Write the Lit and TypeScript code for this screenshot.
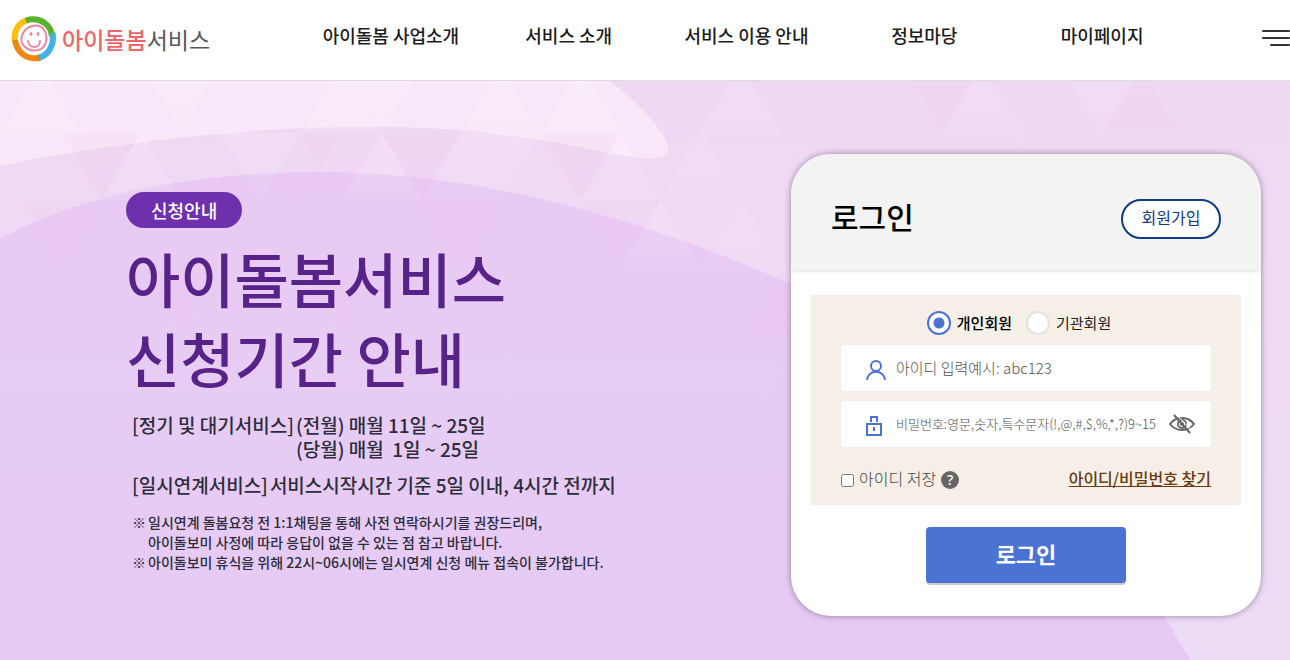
import { LitElement, html, css, svg } from "lit";
import { customElement, state } from "lit/decorators.js";

const NAV = ["아이돌봄 사업소개", "서비스 소개", "서비스 이용 안내", "정보마당", "마이페이지"];

@customElement("site-header")
class SiteHeader extends LitElement {
  static styles = css`
    :host {
      display: block;
    }
    .bar {
      display: flex;
      align-items: center;
      height: 80px;
      background: #fff;
      border-bottom: 1px solid #dcdcdc;
    }
    .brand {
      display: flex;
      align-items: center;
      gap: 5px;
      box-sizing: border-box;
      width: 302px;
      padding: 0 0 3px 11px;
      flex: none;
      color: #58585a;
      font-size: 23px;
      line-height: 46px;
      text-decoration: none;
    }
    .brand b {
      font-weight: 500;
      color: #ee6468;
    }
    .brand svg {
      display: block;
      flex: none;
    }
    nav {
      flex: 1;
      padding-bottom: 10px;
    }
    ul {
      display: grid;
      grid-template-columns: repeat(5, 1fr);
      margin: 0;
      padding: 0;
      list-style: none;
    }
    li {
      text-align: center;
    }
    li a {
      color: #1c1c1c;
      font-size: 18px;
      font-weight: 500;
      line-height: 28px;
      text-decoration: none;
      white-space: nowrap;
    }
    .menu {
      display: flex;
      justify-content: flex-end;
      width: 99px;
      flex: none;
      padding: 0 0 4px;
      border: 0;
      background: none;
      cursor: pointer;
    }
  `;

  render() {
    return html`
      <header class="bar">
        <a class="brand" href="#">
          <svg width="46" height="46" viewBox="0 0 46 46" fill="none" aria-hidden="true">
            <path d="M4 26C2 15 8 6 17 4" stroke="#fbbf0f" stroke-width="6" />
            <path d="M15 4.500C29 0 40 9 41 20" stroke="#57b32c" stroke-width="6" />
            <path d="M41.500 17C44 30 36 41 26 42" stroke="#41b2e9" stroke-width="6" />
            <path d="M29 42C16 44 6 37 4 24" stroke="#f1860f" stroke-width="6" />
            <path d="M17 8l-3-2 5-1zM37 18l2 5 2-6 2 5 2-6zM29 38l-4 3 3 3zM1 27l4-4 3 2z" fill="#57b32c" opacity="0.3" />
            <path d="M21 10C32 7 37 17 35 26S21 37 14 31 11 13 21 10Z" stroke="#f283a6" stroke-width="2" />
            <path d="M17 25C18 33 29 33 29 25" stroke="#f283a6" stroke-width="2" stroke-linecap="round" />
            <ellipse cx="20" cy="18" rx="1.500" ry="2" fill="#f283a6" />
            <ellipse cx="27" cy="18" rx="1.500" ry="2" fill="#f283a6" />
          </svg>
          <span><b>아이돌봄</b>서비스</span>
        </a>
        <nav>
          <ul>
            ${NAV.map((t) => html`<li><a href="#">${t}</a></li>`)}
          </ul>
        </nav>
        <button class="menu" type="button" aria-label="전체메뉴">
          <svg width="28" height="16" viewBox="0 0 28 16" fill="#333" aria-hidden="true">
            <rect width="28" height="2" rx="1" />
            <rect y="7" width="28" height="2" rx="1" />
            <rect x="8" y="14" width="20" height="2" rx="1" />
          </svg>
        </button>
      </header>
    `;
  }
}

@customElement("login-card")
class LoginCard extends LitElement {
  @state() private kind = "person";
  @state() private visible = false;

  static styles = css`
    :host {
      display: block;
    }
    .card {
      border-radius: 40px;
      background: #fff;
      box-shadow: 0 0 6px rgba(70, 40, 80, 0.5);
      overflow: hidden;
    }
    .head {
      display: flex;
      align-items: center;
      justify-content: space-between;
      padding: 45px 40px 31px;
      background: #f3f3f3;
      box-shadow: 0 1px 4px rgba(0, 0, 0, 0.15);
    }
    h2 {
      margin: 0;
      padding-bottom: 6px;
      color: #000;
      font-size: 30px;
      font-weight: 500;
      line-height: 34px;
    }
    .join {
      box-sizing: border-box;
      width: 100px;
      height: 40px;
      border: 2px solid #0f3b85;
      border-radius: 20px;
      background: #fff;
      color: #0f3b85;
      font-size: 16px;
      line-height: 33px;
      text-align: center;
      text-decoration: none;
    }
    form {
      display: flex;
      flex-direction: column;
      align-items: center;
      gap: 22px;
      padding: 25px 20px 33px;
    }
    .box {
      display: flex;
      flex-direction: column;
      gap: 10px;
      box-sizing: border-box;
      width: 100%;
      margin: 0;
      padding: 16px 30px 14px;
      border: 0;
      background: #f6efe8;
    }
    .kinds {
      display: flex;
      justify-content: center;
    }
    .kind {
      display: flex;
      align-items: center;
      gap: 6px;
      margin-right: 14px;
      color: #222;
      font-size: 15px;
      line-height: 24px;
    }
    .kind.on {
      color: #000;
      font-weight: 500;
    }
    .kind input {
      appearance: none;
      box-sizing: border-box;
      width: 24px;
      height: 24px;
      margin: 0;
      border: 2px solid #e2e2e2;
      border-radius: 50%;
      background: #fff;
    }
    .kind input:checked {
      border-color: #4a73d3;
      background: radial-gradient(circle, #4a73d3 5px, #fff 6px);
    }
    .field {
      display: flex;
      align-items: center;
      gap: 9px;
      height: 46px;
      padding: 0 16px 0 24px;
      border-radius: 3px;
      background: #fff;
    }
    .field svg {
      display: block;
      flex: none;
    }
    .field .glyph {
      padding-top: 3px;
    }
    .field input {
      flex: 1;
      min-width: 0;
      padding: 0;
      border: 0;
      outline: 0;
      background: none;
      color: #333;
      font: 300 15px/24px "Noto Sans CJK KR", sans-serif;
    }
    .field input::placeholder {
      color: #505050;
      opacity: 1;
    }
    .field .small {
      font-size: 13px;
    }
    .eye {
      margin-left: 4px;
      padding: 0;
      border: 0;
      background: none;
      cursor: pointer;
    }
    .row {
      display: flex;
      align-items: flex-start;
      justify-content: space-between;
      padding-top: 8px;
    }
    .save {
      display: flex;
      align-items: center;
      gap: 5px;
      color: #444;
      font-size: 16px;
      font-weight: 300;
      line-height: 26px;
    }
    .save input {
      width: 13px;
      height: 13px;
      margin: 4px 0 0;
    }
    .help {
      width: 18px;
      height: 18px;
      margin-top: 4px;
      padding: 0;
      border: 0;
      border-radius: 50%;
      background: #666;
      color: #fff;
      font: 500 14px/18px "Noto Sans", sans-serif;
    }
    .find {
      color: #6b3a12;
      font-size: 16px;
      font-weight: 500;
      line-height: 26px;
    }
    .submit {
      width: 200px;
      height: 56px;
      padding: 0 0 4px;
      border: 0;
      border-radius: 4px;
      background: #4a73d3;
      box-shadow: 0 2px 0 #c9c9d2;
      color: #fff;
      font: 700 22px/32px "Noto Sans CJK KR", sans-serif;
      cursor: pointer;
    }
  `;

  private radio(id: string, text: string) {
    return html`<label class="kind ${this.kind === id ? "on" : ""}">
      <input type="radio" name="kind" .checked=${this.kind === id} @change=${() => (this.kind = id)} />${text}
    </label>`;
  }

  render() {
    return html`
      <section class="card">
        <div class="head">
          <h2>로그인</h2>
          <a class="join" href="#">회원가입</a>
        </div>
        <form @submit=${(e: Event) => e.preventDefault()}>
          <div class="box">
            <div class="kinds">${this.radio("person", "개인회원")}${this.radio("org", "기관회원")}</div>
            <label class="field">
              <svg class="glyph" width="22" height="22" viewBox="0 0 22 22" fill="none" stroke="#4a73d3" stroke-width="2" aria-hidden="true">
                <circle cx="11" cy="7" r="5" />
                <path d="M2 21C3 10 19 10 20 21" />
              </svg>
              <input type="text" aria-label="아이디" placeholder="아이디 입력예시: abc123" />
            </label>
            <div class="field">
              <svg class="glyph" width="22" height="22" viewBox="0 0 22 22" fill="none" stroke="#4a73d3" stroke-width="2" aria-hidden="true">
                <rect x="2" y="9" width="14" height="11" />
                <path d="M6 7V2h6v5M9 12v4" />
              </svg>
              <input
                class="small"
                type=${this.visible ? "text" : "password"}
                aria-label="비밀번호"
                placeholder="비밀번호:영문,숫자,특수문자(!,@,#,$,%,*,?)9~15자"
              />
              <button class="eye" type="button" aria-label="비밀번호 표시" @click=${() => (this.visible = !this.visible)}>
                <svg width="26" height="20" viewBox="0 0 26 20" fill="none" stroke="#666" stroke-width="2" aria-hidden="true">
                  <path d="M1 10C7 2 19 2 25 10 19 18 7 18 1 10Z" />
                  <circle cx="13" cy="10" r="4" />
                  <circle cx="13" cy="10" r="2" fill="#666" stroke="none" />
                  <path d="M7 0L24 18" stroke="#fff" stroke-width="1" />
                  <path d="M5 1L21 19" stroke-width="2" />
                </svg>
              </button>
            </div>
            <div class="row">
              <div class="save">
                <input id="save" type="checkbox" /><label for="save">아이디 저장</label>
                <button class="help" type="button" aria-label="도움말">?</button>
              </div>
              <a class="find" href="#">아이디/비밀번호 찾기</a>
            </div>
          </div>
          <button class="submit" type="submit">로그인</button>
        </form>
      </section>
    `;
  }
}

/* Triangles of the backdrop: apex x, apex y, direction (1 = pointing up), fill name, opacity */
const TRIS: [number, number, number, string, number][] = [
  [141, 52, 1, "white", 0.22],
  [41, -15, 1, "white", 0.24],
  [261, 119, -1, "white", 0.16],
  [181, 52, -1, "white", 0.14],
  [382, 52, 1, "white", 0.22],
  [341, -15, 1, "white", 0.2],
  [382, 52, -1, "white", 0.2],
  [461, 52, 1, "white", 0.14],
  [501, -15, 1, "white", 0.2],
  [501, 119, -1, "white", 0.14],
  [581, -15, 1, "white", 0.28],
  [620, 52, 1, "white", 0.2],
  [661, 119, 1, "white", 0.16],
  [701, 52, 1, "white", 0.1],
  [741, 119, 1, "white", 0.12],
  [741, -15, 1, "white", 0.14],
  [982, -15, 1, "white", 0.12],
  [1102, 52, -1, "white", 0.12],
  [101, 119, -1, "pink", 0.2],
  [341, 119, -1, "pink", 0.12],
  [421, 119, -1, "pink", 0.24],
  [581, 119, -1, "pink", 0.2],
  [61, 187, -1, "pink", 0.22],
  [301, 119, -1, "pink", 0.1],
  [461, 187, -1, "pink", 0.24],
  [621, 187, -1, "pink", 0.12],
  [181, 255, -1, "pink", 0.2],
  [341, 255, -1, "pink", 0.2],
  [781, 187, 1, "pink", 0.18],
  [942, 52, -1, "pink", 0.14],
  [1142, -15, 1, "pink", 0.12],
];

@customElement("app-root")
class AppRoot extends LitElement {
  static styles = css`
    :host {
      display: block;
      font-family: "Noto Sans CJK KR", sans-serif;
    }
    .hero {
      display: grid;
      min-height: calc(100vh - 81px);
      background: #e6ccf3;
      overflow: hidden;
    }
    .backdrop,
    .content {
      grid-area: 1 / 1;
    }
    .backdrop {
      width: 100%;
      height: 100%;
      min-height: 0;
      contain: size;
    }
    .content {
      display: flex;
      align-items: flex-start;
      justify-content: space-between;
      gap: 40px;
      padding: 73px 29px 44px 126px;
    }
    .notice {
      padding-top: 38px;
      color: #2d2d3b;
      font-weight: 500;
    }
    .badge {
      display: inline-block;
      padding: 0 25px;
      border-radius: 18px;
      background: #6f30ad;
      color: #fff;
      font-size: 18px;
      line-height: 36px;
    }
    h1 {
      margin: 10px 0 15px;
      color: #572389;
      font-size: 59px;
      font-weight: 500;
      line-height: 80px;
    }
    .times,
    .notes {
      margin: 0;
      padding-left: 6px;
    }
    .times {
      display: flex;
      flex-direction: column;
      gap: 12px;
      font-size: 19px;
      line-height: 24px;
    }
    .term {
      display: flex;
      gap: 2px;
    }
    .times dt,
    .times dd {
      margin: 0;
    }
    .notes {
      margin-top: 15px;
      list-style: none;
      font-size: 14px;
      line-height: 20px;
    }
    .notes li {
      display: flex;
      gap: 2px;
    }
    login-card {
      width: 470px;
      flex: none;
    }
  `;

  render() {
    return html`
      <site-header></site-header>
      <main class="hero">
        <svg class="backdrop" viewBox="0 0 1290 579" preserveAspectRatio="xMidYMin slice" aria-hidden="true">
          <defs>
            <linearGradient id="mid" x1="0" y1="0" x2="0" y2="1">
              <stop offset="0" stop-color="#f0d8f4" />
              <stop offset="1" stop-color="#ecdcf6" />
            </linearGradient>
            <linearGradient id="low" x1="0" y1="0" x2="0" y2="1">
              <stop offset="0" stop-color="#e9c9f3" />
              <stop offset="0.400" stop-color="#e7ccf4" />
              <stop offset="1" stop-color="#e6caf4" />
            </linearGradient>
            <linearGradient id="white" x1="0" y1="0" x2="0" y2="1">
              <stop offset="0" stop-color="#fff" />
              <stop offset="1" stop-color="#fff" stop-opacity="0.300" />
            </linearGradient>
            <linearGradient id="pink" x1="0" y1="0" x2="0" y2="1">
              <stop offset="0" stop-color="#f0bdea" stop-opacity="0.500" />
              <stop offset="1" stop-color="#f0bdea" />
            </linearGradient>
          </defs>
          <rect width="1290" height="579" fill="url(#mid)" />
          <path d="M0 85C120 60 250 46 368 46C470 45 540 58 600 70C636 78 668 82 668 68C668 52 640 24 610 0H0Z" fill="#f8e7f8" />
          <path d="M0 158C90 108 210 91 320 91C490 92 650 141 791 203C960 290 1100 418 1190 579H0Z" fill="url(#low)" />
          ${TRIS.map(
            ([x, y, d, c, o]) => svg`<path d="M${x} ${y}l-40 ${d * 67}h80z" fill="url(#${c})" opacity=${o} />`
          )}
        </svg>
        <div class="content">
          <section class="notice">
            <span class="badge">신청안내</span>
            <h1>아이돌봄서비스<br />신청기간 안내</h1>
            <dl class="times">
              <div class="term">
                <dt>[정기 및 대기서비스]</dt>
                <dd>(전월) 매월 11일 ~ 25일<br />(당월) 매월 &nbsp;1일 ~ 25일</dd>
              </div>
              <div class="term">
                <dt>[일시연계서비스]</dt>
                <dd>서비스시작시간 기준 5일 이내, 4시간 전까지</dd>
              </div>
            </dl>
            <ul class="notes">
              <li>
                <span>※</span>
                <span>일시연계 돌봄요청 전 1:1채팅을 통해 사전 연락하시기를 권장드리며,<br />아이돌보미 사정에 따라 응답이 없을 수 있는 점 참고 바랍니다.</span>
              </li>
              <li><span>※</span><span>아이돌보미 휴식을 위해 22시~06시에는 일시연계 신청 메뉴 접속이 불가합니다.</span></li>
            </ul>
          </section>
          <login-card></login-card>
        </div>
      </main>
    `;
  }
}
